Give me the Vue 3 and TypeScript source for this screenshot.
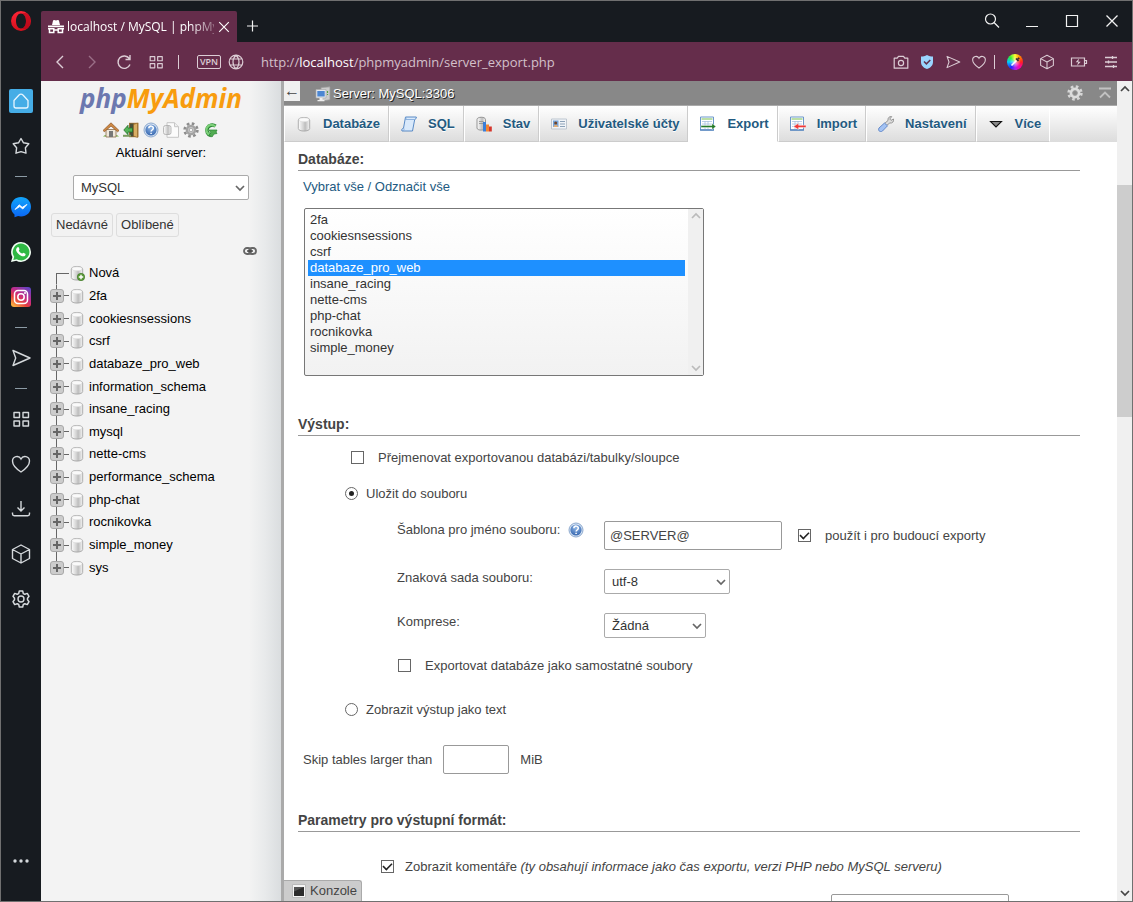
<script setup lang="ts">
import { ref } from 'vue'

interface RailItem {
  icon?: string
  label?: string
  active?: boolean
}
interface Tab {
  label: string
  icon: string
  active?: boolean
}

const rail: RailItem[] = [
  { icon: 'home', label: 'Domů', active: true },
  { icon: 'star', label: 'Oblíbené' },
  {},
  { icon: 'messenger', label: 'Messenger' },
  { icon: 'whatsapp', label: 'WhatsApp' },
  { icon: 'instagram', label: 'Instagram' },
  {},
  { icon: 'send', label: 'Flow' },
  {},
  { icon: 'grid', label: 'Rychlá volba' },
  { icon: 'heart', label: 'Záložky' },
  { icon: 'download', label: 'Stahování' },
  { icon: 'cube', label: 'Rozšíření' },
  { icon: 'gear', label: 'Nastavení' },
]

const navIcons = [
  { icon: 'p-home', label: 'Domů' },
  { icon: 'p-exit', label: 'Odhlásit' },
  { icon: 'p-help', label: 'Dokumentace' },
  { icon: 'p-docs', label: 'Dokumentace MySQL' },
  { icon: 'p-gear', label: 'Nastavení panelu' },
  { icon: 'p-reload', label: 'Obnovit' },
]

const tree = [
  '2fa', 'cookiesnsessions', 'csrf', 'databaze_pro_web', 'information_schema',
  'insane_racing', 'mysql', 'nette-cms', 'performance_schema', 'php-chat',
  'rocnikovka', 'simple_money', 'sys',
]

const tabs: Tab[] = [
  { label: 'Databáze', icon: 'p-db' },
  { label: 'SQL', icon: 'p-sql' },
  { label: 'Stav', icon: 'p-status' },
  { label: 'Uživatelské účty', icon: 'p-users' },
  { label: 'Export', icon: 'p-export', active: true },
  { label: 'Import', icon: 'p-import' },
  { label: 'Nastavení', icon: 'p-wrench' },
  { label: 'Více', icon: 'p-more' },
]

const databases = [
  '2fa', 'cookiesnsessions', 'csrf', 'databaze_pro_web', 'insane_racing',
  'nette-cms', 'php-chat', 'rocnikovka', 'simple_money',
]

const selected = ref<string[]>(['databaze_pro_web'])
const rename = ref(false)
const output = ref('file')
const template = ref('@SERVER@')
const remember = ref(true)
const separate = ref(false)
const comments = ref(true)
const skip = ref('')
</script>

<template>
  <svg class="sprite" aria-hidden="true">
    <defs>
      <linearGradient id="gCyl" x1="0" x2="1"><stop offset="0" stop-color="#fff" /><stop offset=".45" stop-color="#d2d2d2" /><stop offset=".6" stop-color="#bdbdbd" /><stop offset="1" stop-color="#f6f6f6" /></linearGradient>
      <linearGradient id="gMsg" x2="0" y2="1"><stop offset="0" stop-color="#12a5fb" /><stop offset="1" stop-color="#0a66f5" /></linearGradient>
      <linearGradient id="gInsta" x1=".9" y1="0" x2=".2" y2="1"><stop offset="0" stop-color="#5b45c9" /><stop offset=".45" stop-color="#c62b86" /><stop offset=".7" stop-color="#e6413c" /><stop offset="1" stop-color="#fbb040" /></linearGradient>
      <linearGradient id="gOpera" x2="0" y2="1"><stop offset="0" stop-color="#ff2436" /><stop offset="1" stop-color="#d4101c" /></linearGradient>
      <radialGradient id="gHelp" cx=".5" cy=".3" r=".7"><stop offset="0" stop-color="#8fb6e6" /><stop offset="1" stop-color="#3868b0" /></radialGradient>
    </defs>
    <symbol id="opera" viewBox="0 0 20 20"><path fill="url(#gOpera)" fill-rule="evenodd" d="M10 0a10 10 0 1 0 0 20 10 10 0 0 0 0-20zM10 2.500c3 0 5 3.400 5 7.500s-2 7.500-5 7.500S5 14 5 10s2-7.500 5-7.500z" /><path fill="#a70014" d="M11 2.500C13.500 1.500 16 2 17 3.200c4 4 3.500 10.500-.5 14-1.600 1.200-3.800 1.200-5.500.3 2.500-.9 4-4 4-7.500s-1.500-6.700-4-7.500z" opacity=".55" /></symbol>
    <symbol id="home" viewBox="0 0 24 24"><path d="M5 11.500 9.800 6.200a3.200 3.200 0 0 1 4.400 0L19 11.500V17a2 2 0 0 1-2 2H7a2 2 0 0 1-2-2z" fill="none" stroke="#e8f6ff" stroke-width="1.300" /></symbol>
    <symbol id="star" viewBox="0 0 24 24"><path d="m12 4.500 2.500 4.300 5.300 1-3.400 4 .6 5.400-5-1.500-5 1.500.6-5.400-3.400-4 5.300-1z" fill="none" stroke="currentColor" stroke-width="1.400" stroke-linejoin="round" /></symbol>
    <symbol id="messenger" viewBox="0 0 24 24"><path d="M12 2c5.700 0 10 4.200 10 9.700s-4.300 9.700-10 9.700c-1 0-2-.1-2.900-.4L5.500 22.300v-2.800C3.300 17.700 2 15 2 11.700 2 6.200 6.300 2 12 2z" fill="url(#gMsg)" /><path d="m6 14.500 4.200-4.700 3 2.500L18 9.400 13.800 14l-3-2.400z" fill="#fff" stroke="#fff" stroke-width=".8" /></symbol>
    <symbol id="whatsapp" viewBox="0 0 24 24"><path d="M12 2a10 10 0 0 1 0 20c-1.700 0-3.300-.4-4.700-1.200L2 22l1.400-5A10 10 0 0 1 12 2z" fill="#f2fff5" /><path d="M12 3.600a8.400 8.400 0 1 1-4.300 15.600L4.300 20l.9-3.300A8.400 8.400 0 0 1 12 3.600z" fill="#2fb944" /><path d="M8.600 7.200c.7-.4 1.100 0 1.300.6l.6 1.400c.2.600-.8 1.200-.6 1.500.7 1.300 1.700 2.200 3.100 2.900.4.200 1-.9 1.400-.8l1.900.9c.6.300.3 1.300-.1 1.800-.9 1-2.400 1-3.700.5-2.600-1-4.200-2.800-5.200-4.900-.5-1.500-.1-3 1.300-3.900z" fill="#fff" /></symbol>
    <symbol id="instagram" viewBox="0 0 24 24"><rect x="2" y="2" width="20" height="20" rx="3" fill="url(#gInsta)" /><rect x="5.500" y="5.500" width="13" height="13" rx="3.500" fill="none" stroke="#fff" stroke-width="1.500" /><circle cx="12" cy="12" r="3.200" fill="none" stroke="#fff" stroke-width="1.500" /><circle cx="16" cy="8" r="1" fill="#fff" /></symbol>
    <symbol id="send" viewBox="0 0 24 24"><path d="m4 4.500 17 7.500-17 7.500L6.700 12z" fill="none" stroke="currentColor" stroke-width="1.400" stroke-linejoin="round" /></symbol>
    <symbol id="grid" viewBox="0 0 24 24"><path d="M5 5.500h5.500v5H5zM14 5.500h5.500v5H14zM5 14h5.500v5H5zM14 14h5.500v5H14z" fill="none" stroke="currentColor" stroke-width="1.400" stroke-linejoin="round" /></symbol>
    <symbol id="heart" viewBox="0 0 24 24"><path d="M12 20C7.500 17 3.500 13 3.500 9a4.500 4.500 0 0 1 8.500-2 4.500 4.500 0 0 1 8.500 2c0 4-4 8-8.500 11z" fill="none" stroke="currentColor" stroke-width="1.400" /></symbol>
    <symbol id="download" viewBox="0 0 24 24"><path d="M12 4v9.500M8.500 10.500 12 14l3.500-3.500M3.500 15.500V17c0 1 .7 1.700 1.700 1.700h13.600c1 0 1.700-.7 1.700-1.700v-1.500" fill="none" stroke="currentColor" stroke-width="1.400" /></symbol>
    <symbol id="cube" viewBox="0 0 24 24"><path d="m12 3 8.500 4.500v9L12 21l-8.500-4.500v-9zM3.500 7.500 12 12l8.500-4.500M12 12v9" fill="none" stroke="currentColor" stroke-width="1.400" stroke-linejoin="round" /></symbol>
    <symbol id="gear" viewBox="0 0 24 24"><path d="M10.300 4h3.400l.6 2.500 1.500.8 2.500-.9L20 9.300l-1.500 1.900v1.600l1.500 1.900-1.700 2.900-2.500-.9-1.500.8-.6 2.500h-3.400l-.6-2.500-1.500-.8-2.500.9L4 14.700l1.500-1.900v-1.600L4 9.300l1.700-2.900 2.500.9 1.500-.8z" fill="none" stroke="currentColor" stroke-width="1.500" stroke-linejoin="round" /><circle cx="12" cy="12" r="3" fill="none" stroke="currentColor" stroke-width="1.400" /></symbol>
    <symbol id="dots" viewBox="0 0 24 24"><circle cx="6" cy="12" r="1.700" fill="currentColor" /><circle cx="12" cy="12" r="1.700" fill="currentColor" /><circle cx="18" cy="12" r="1.700" fill="currentColor" /></symbol>
    <symbol id="spy" viewBox="0 0 16 16"><path d="M4 6 5 1.800c.2-.7.600-1 1.300-.8L8 1.500 9.700 1c.7-.2 1.100.1 1.300.8L12 6zM0 6.600h16v1.600H0z" fill="#fff" /><path d="M1.500 9.800h4.300v3.800H1.500zM10.200 9.800h4.300v3.800h-4.300zM5.800 11h4.400M0 9.800h2M14 9.800h2" fill="none" stroke="#fff" stroke-width="1.500" /></symbol>
    <symbol id="x" viewBox="0 0 16 16"><path d="m2.500 2.500 11 11m0-11-11 11" stroke="currentColor" stroke-width="1.300" /></symbol>
    <symbol id="plus" viewBox="0 0 16 16"><path d="M7.500 2.500v11M2 8h11" stroke="currentColor" stroke-width="1.200" /></symbol>
    <symbol id="search" viewBox="0 0 16 16"><circle cx="6.500" cy="6" r="5" fill="none" stroke="currentColor" stroke-width="1.200" /><path d="m10 9.500 5 5" stroke="currentColor" stroke-width="1.300" /></symbol>
    <symbol id="min" viewBox="0 0 16 16"><path d="M2 13.500h12" stroke="currentColor" /></symbol>
    <symbol id="max" viewBox="0 0 16 16"><path d="M2.500 2.500h11v11h-11z" fill="none" stroke="currentColor" stroke-width="1.200" /></symbol>
    <symbol id="back" viewBox="0 0 16 16"><path d="M11 2 5 8l6 6" fill="none" stroke="currentColor" stroke-width="1.400" /></symbol>
    <symbol id="reload" viewBox="0 0 16 16"><path d="M14 10.500A6.200 6.200 0 1 1 13.300 4.500M14 1v4.500H9.500" fill="none" stroke="currentColor" stroke-width="1.400" /></symbol>
    <symbol id="globe" viewBox="0 0 16 16"><path d="M8 1.200a6.800 6.800 0 1 0 0 13.600A6.800 6.800 0 0 0 8 1.200zM8 1.200c-4 3.500-4 10 0 13.600 4-3.600 4-10 0-13.600zM2 5h12M2 11h12" fill="none" stroke="currentColor" stroke-width="1.200" /></symbol>
    <symbol id="camera" viewBox="0 0 16 16"><path d="M1.200 4.200h3L5.500 2.300h5l1.300 1.900h3v10H1.200z" fill="none" stroke="currentColor" stroke-width="1.200" stroke-linejoin="round" /><circle cx="8" cy="9" r="2.600" fill="none" stroke="currentColor" stroke-width="1.200" /></symbol>
    <symbol id="shield" viewBox="0 0 16 16"><path d="M8 1c2 1.200 4 1.600 6 1.600V8c0 3.500-2.500 5.800-6 7-3.500-1.200-6-3.500-6-7V2.600C4 2.600 6 2.200 8 1z" fill="#9ad5ff" /><path d="m5 7.500 2.400 2.400L11.300 6" fill="none" stroke="#5f3150" stroke-width="1.500" /></symbol>
    <symbol id="dropper" viewBox="0 0 16 16"><path d="m4.500 11.500 5-5" stroke="#fff" stroke-width="1.600" /><path d="m9 4.500 2.500 2.500M10.500 5.500l1.700-1.700" stroke="#3b2a33" stroke-width="1.700" /></symbol>
    <symbol id="battery" viewBox="0 0 18 16"><path d="M1.500 4h13v8h-13zM14.500 6.500h2v3h-2" fill="none" stroke="currentColor" stroke-width="1.200" /><path d="M9 4.500 5.700 8.200h2.500L7 11.700l3.700-4H8.300z" fill="currentColor" /></symbol>
    <symbol id="sliders" viewBox="0 0 16 16"><path d="M2 3.500h12M2 8h12M2 12.500h12M9.500 2v3M5.500 6.500v3M10.500 11v3" stroke="currentColor" stroke-width="1.300" /></symbol>
    <symbol id="chev" viewBox="0 0 10 10"><path d="m1 3 4 4 4-4" fill="none" stroke="currentColor" stroke-width="1.700" /></symbol>

    <symbol id="p-home" viewBox="0 0 16 16"><path d="M0 14.500c2-2 4-1 5-.5h6c1-.5 3-1.500 5 .5z" fill="#6cab3d" /><path d="M3 7.500h10V15H3z" fill="#eee7da" stroke="#8c6c4a" stroke-width=".8" /><path d="M6 9h4v6H6z" fill="#777" /><path d="M8 .8 0 8.500l1.300 1.300L8 4l6.700 5.800L16 8.500z" fill="#cf8a45" stroke="#8a5222" stroke-width=".7" /></symbol>
    <symbol id="p-exit" viewBox="0 0 16 16"><path d="M6 .8h9.500v14.400H6z" fill="#a87838" /><path d="M6.800 1.500h4v13h-4z" fill="#4a4f39" /><path d="m10.500 2.500 4-1.500v14.500l-4-1.500z" fill="#d9ae65" stroke="#80591f" stroke-width=".5" /><path d="M0 12.800h8v2H0z" fill="#7b9b60" /><path d="M9.500 6v4H5v2.700L.8 8 5 3.300V6z" fill="#54b456" stroke="#246f2b" stroke-width=".8" /></symbol>
    <symbol id="p-help" viewBox="0 0 16 16"><circle cx="8" cy="8" r="7" fill="#d9e5f4" stroke="#8da9ce" /><circle cx="8" cy="8" r="5.600" fill="url(#gHelp)" /><path d="M5.800 6.300c.3-3 4.700-2.800 4.500 0C10.200 8 8.100 8 8.100 9.500M8.100 10.700v1.400" fill="none" stroke="#fff" stroke-width="1.500" /></symbol>
    <symbol id="p-docs" viewBox="0 0 16 16"><path d="M4 .7h7.500l4 4v10.600H4z" fill="#fbfbfb" stroke="#c6c6c6" /><path d="M11.500.7v4h4" fill="#eee" stroke="#c6c6c6" /><rect x=".5" y="3.500" width="7.500" height="9" rx="2" fill="url(#gCyl)" stroke="#a9a9a9" stroke-width=".8" /></symbol>
    <symbol id="p-gear" viewBox="0 0 16 16"><circle cx="8" cy="8" r="6.400" fill="none" stroke="#8c8c8c" stroke-width="2.600" stroke-dasharray="2.600 2.430" /><circle cx="8" cy="8" r="4" fill="#eee" stroke="#a3a3a3" stroke-width="2.700" /><circle cx="8" cy="8" r="1.900" fill="#f4f4f4" stroke="#888" stroke-width=".8" /></symbol>
    <symbol id="p-gear-light" viewBox="0 0 16 16"><circle cx="8" cy="8" r="6.400" fill="none" stroke="#d6d6d6" stroke-width="2.600" stroke-dasharray="2.600 2.430" /><circle cx="8" cy="8" r="4" fill="none" stroke="#dcdcdc" stroke-width="2.900" /><circle cx="8" cy="8" r="2.400" fill="#888" stroke="#aaa" stroke-width=".6" /></symbol>
    <symbol id="p-reload" viewBox="0 0 16 16"><path d="M12.500 4.200A5.300 5.300 0 1 0 8 13.500" fill="none" stroke="#278431" stroke-width="3.600" /><path d="M12.200 4.400A5.100 5.100 0 1 0 8 13" fill="none" stroke="#7bcf78" stroke-width="2.200" /><path d="M6 8h8l-1 2 1 1.500-3 .5-2 3-3-2 2-2z" fill="#52ad52" stroke="#278431" stroke-width=".7" /></symbol>
    <symbol id="p-db" viewBox="0 0 16 16"><path d="M2.300 4c0-3.400 11.400-3.400 11.400 0v8.500c0 3.400-11.400 3.400-11.400 0z" fill="url(#gCyl)" stroke="#a5a5a5" stroke-width=".9" /><ellipse cx="8" cy="3.800" rx="5.200" ry="2" fill="#fafafa" stroke="#d5d5d5" stroke-width=".5" /></symbol>
    <symbol id="p-dbnew" viewBox="0 0 16 16"><use href="#p-db" width="16" height="16" /><circle cx="12" cy="12" r="3.700" fill="#5c9b3b" stroke="#37711f" stroke-width=".6" /><path d="M12 9.800v4.400M9.800 12h4.400" stroke="#fff" stroke-width="1.400" /></symbol>
    <symbol id="p-sql" viewBox="0 0 16 16"><path d="M4.500 1h10.800c.5 1.500-1 2.200-1.600 2.500L11.500 15H1c-.8-1.500.2-2.500 1.500-2.800z" fill="#d9e9fb" stroke="#4a7fc0" stroke-width=".9" /><path d="M4.500 1c1 1 .5 2 0 2.500h9M2.500 12.200c1 .7.500 2-.3 2.800" fill="none" stroke="#7ba5d8" stroke-width=".8" /></symbol>
    <symbol id="p-status" viewBox="0 0 16 16"><path d="M1 3.500c0-3 8.500-3 8.500 0V12c0 2.800-8.500 2.800-8.500 0z" fill="url(#gCyl)" stroke="#888" stroke-width=".9" /><path d="M3 5.500h4.500M3 7.500h4.500" stroke="#999" /><path d="M7 6h3v9.500H7z" fill="#3b7fd8" /><path d="M10 8.500h3v7h-3z" fill="#f48432" /><path d="M13 10.500h2.800v5H13z" fill="#d5352c" /></symbol>
    <symbol id="p-users" viewBox="0 0 16 16"><path d="M.5 3h15v10H.5z" fill="#f1f4f8" stroke="#bdc6d0" /><path d="M2 4.500h5.500V11H2z" fill="#75a5da" /><circle cx="4.700" cy="7" r="1.500" fill="#70442a" /><path d="M2.500 11c.4-3 4-3 4.500 0z" fill="#e4ae77" /><path d="M9 5.500h5M9 8h5M9 10.500h5" stroke="#8ba1b8" /></symbol>
    <symbol id="p-table" viewBox="0 0 16 16"><path d="M.5 1h13v13H.5z" fill="#fff" stroke="#6b97ca" /><path d="M1.500 3h11" stroke="#8ec96b" stroke-width="1.200" /><path d="M2 5.500h10M2 8h10M2 10.500h10M5 5v8M8 5v8" stroke="#a9c2df" stroke-width=".8" /><path d="M0 14h14" stroke="#5686bf" stroke-width="1.400" /></symbol>
    <symbol id="p-export" viewBox="0 0 16 16"><use href="#p-table" width="16" height="16" /><path d="M1 9.500h11V7.500l4 3-4 3v-2H1z" fill="#267b28" stroke="#fff" stroke-width=".4" /></symbol>
    <symbol id="p-import" viewBox="0 0 16 16"><use href="#p-table" width="16" height="16" /><path d="M16 9.300H8.500v-2L3.500 10.500l5 3v-2H16z" fill="#f03a38" stroke="#fff" stroke-width=".4" /></symbol>
    <symbol id="p-wrench" viewBox="0 0 16 16"><path d="m6.500 7.500 3.500-3c-.5-2.500 1.500-4.500 3.700-3.900L11.800 3l1.200 1.400L15.500 3c.7 2.500-1.200 4.500-3.700 4L8.500 9.500z" fill="#ddd" stroke="#828282" stroke-width=".8" /><path d="m6.500 7 3 2.800-5 5.200c-2 2-5-.5-3.500-3z" fill="#a3c2f3" stroke="#5b82c4" stroke-width=".9" /></symbol>
    <symbol id="p-more" viewBox="0 0 16 16"><path d="M2.500 5.500h11L8 11z" fill="#888" stroke="#111" stroke-width="1.100" /></symbol>
    <symbol id="p-server" viewBox="0 0 16 16"><path d="M6 1.500 15 .8v13l-5 .7H6z" fill="#ccc" stroke="#999" stroke-width=".8" /><path d="M12.500 5v2M12.500 8v1" stroke="#57a344" stroke-width="1.200" /><path d="M1 3.500h10v8.500H1z" fill="#e4e9ee" stroke="#aaa" stroke-width=".7" /><path d="M2.300 5h7.400v5.500H2.300z" fill="#4b86d2" /><path d="M4.500 12h3v2h2v1.300h-7V14h2z" fill="#eee" /></symbol>
    <symbol id="p-link" viewBox="0 0 14 10"><rect x="1" y="2" width="7" height="6" rx="3" fill="none" stroke="#666" stroke-width="1.800" /><rect x="6" y="2" width="7" height="6" rx="3" fill="none" stroke="#666" stroke-width="1.800" /><path d="M4 5h6" stroke="#444" stroke-width="1.400" /></symbol>
    <symbol id="p-expand" viewBox="0 0 14 14"><rect x=".5" y=".5" width="13" height="13" rx="2.500" fill="#ccc" stroke="#a8a8a8" /><path d="M7 3v8M3 7h8" stroke="#666" stroke-width="2" /></symbol>
    <symbol id="p-top" viewBox="0 0 12 12"><path d="M0 1.500h12M1 10.500l5-5 5 5" fill="none" stroke="#c2c2c2" stroke-width="1.800" /></symbol>
    <symbol id="p-console" viewBox="0 0 14 14"><path d="M.5.500h13v13H.5z" fill="#f4f4f4" stroke="#bbb" /><path d="M2 3h10v9H2z" fill="#2c2c2c" /><path d="M2 3h10L2 7.500z" fill="#555" /></symbol>
  </svg>

  <div class="window">
    <aside class="rail">
      <button class="opera" aria-label="Opera"><svg><use href="#opera" /></svg></button>
      <template v-for="(item, i) in rail" :key="i">
        <button v-if="item.icon" class="rail-item" :class="{ active: item.active }" :aria-label="item.label">
          <svg><use :href="'#' + item.icon" /></svg>
        </button>
        <div v-else class="dash"></div>
      </template>
      <button class="rail-item last" aria-label="Další"><svg><use href="#dots" /></svg></button>
    </aside>

    <div class="body">
      <header class="titlebar">
        <div class="page-tab">
          <svg class="i16"><use href="#spy" /></svg>
          <span class="tab-title">localhost / MySQL | phpMy</span>
          <button aria-label="Zavřít kartu"><svg class="i14"><use href="#x" /></svg></button>
        </div>
        <button class="slot32" aria-label="Nová karta"><svg class="i16"><use href="#plus" /></svg></button>
        <div class="window-buttons">
          <button aria-label="Hledat"><svg class="i16"><use href="#search" /></svg></button>
          <button aria-label="Minimalizovat"><svg class="i16"><use href="#min" /></svg></button>
          <button aria-label="Maximalizovat"><svg class="i16"><use href="#max" /></svg></button>
          <button aria-label="Zavřít"><svg class="i16"><use href="#x" /></svg></button>
        </div>
      </header>

      <div class="toolbar">
        <button class="slot32" aria-label="Zpět"><svg class="i16"><use href="#back" /></svg></button>
        <button class="slot32 forward" aria-label="Vpřed"><svg class="i16"><use href="#back" /></svg></button>
        <button class="slot32" aria-label="Obnovit"><svg class="i16"><use href="#reload" /></svg></button>
        <button class="slot32" aria-label="Karty"><svg class="i20"><use href="#grid" /></svg></button>
        <i class="bar"></i>
        <button class="vpn">VPN</button>
        <svg class="i16"><use href="#globe" /></svg>
        <div class="url">http://<b>localhost</b>/phpmyadmin/server_export.php</div>
        <button class="slot26" aria-label="Snímek"><svg class="i16"><use href="#camera" /></svg></button>
        <button class="slot26" aria-label="Ochrana"><svg class="i16"><use href="#shield" /></svg></button>
        <button class="slot26" aria-label="Odeslat"><svg class="i18"><use href="#send" /></svg></button>
        <button class="slot26" aria-label="Záložka"><svg class="i18"><use href="#heart" /></svg></button>
        <i class="bar short"></i>
        <button class="slot32" aria-label="Kapátko"><span class="wheel"><svg class="i16"><use href="#dropper" /></svg></span></button>
        <button class="slot32" aria-label="Rozšíření"><svg class="i18"><use href="#cube" /></svg></button>
        <button class="slot32" aria-label="Baterie"><svg class="i18"><use href="#battery" /></svg></button>
        <button class="slot32" aria-label="Snadné nastavení"><svg class="i16"><use href="#sliders" /></svg></button>
      </div>

      <div class="page">
        <nav class="nav">
          <a class="logo" href="#"><span>php</span>MyAdmin</a>
          <div class="nav-icons">
            <a v-for="n in navIcons" :key="n.icon" href="#" :aria-label="n.label"><svg class="i16"><use :href="'#' + n.icon" /></svg></a>
          </div>
          <label class="server-label" for="server">Aktuální server:</label>
          <div class="pick server">
            <select id="server"><option>MySQL</option></select>
            <svg><use href="#chev" /></svg>
          </div>
          <div class="recent">
            <button>Nedávné</button>
            <button>Oblíbené</button>
          </div>
          <a class="link" href="#" aria-label="Propojit s hlavním panelem"><svg><use href="#p-link" /></svg></a>
          <ul class="tree">
            <li class="new">
              <span class="joint"></span>
              <svg class="i16"><use href="#p-dbnew" /></svg>
              <a href="#">Nová</a>
            </li>
            <li v-for="db in tree" :key="db">
              <span class="joint"><button :aria-label="'Rozbalit ' + db"><svg class="i14"><use href="#p-expand" /></svg></button></span>
              <svg class="i16"><use href="#p-db" /></svg>
              <a href="#">{{ db }}</a>
            </li>
          </ul>
        </nav>

        <main class="main">
          <div class="crumbs">
            <button class="collapse" aria-label="Skrýt panel">←</button>
            <svg class="i16"><use href="#p-server" /></svg>
            <a href="#">Server: MySQL:3306</a>
            <button class="settings" aria-label="Nastavení stránky"><svg class="i16"><use href="#p-gear-light" /></svg></button>
            <button aria-label="Nahoru"><svg class="i12"><use href="#p-top" /></svg></button>
          </div>
          <div class="tabs">
            <a v-for="t in tabs" :key="t.label" href="#" :class="{ active: t.active }">
              <svg class="i16"><use :href="'#' + t.icon" /></svg>{{ t.label }}
            </a>
          </div>

          <form class="form" @submit.prevent>
            <section>
              <h3>Databáze:</h3>
              <p class="all"><a href="#">Vybrat vše</a> / <a href="#">Odznačit vše</a></p>
              <div class="listbox">
                <select v-model="selected" multiple size="10" aria-label="Databáze">
                  <option v-for="d in databases" :key="d" :value="d">{{ d }}</option>
                </select>
                <div class="listbar">
                  <svg class="up"><use href="#chev" /></svg>
                  <svg><use href="#chev" /></svg>
                </div>
              </div>
            </section>

            <section class="output">
              <h3>Výstup:</h3>
              <div class="rows">
                <label class="row rename"><input v-model="rename" type="checkbox" />Přejmenovat exportovanou databázi/tabulky/sloupce</label>
                <label class="row radio"><input v-model="output" type="radio" value="file" />Uložit do souboru</label>
                <div class="fields">
                  <div class="field">
                    <label for="tpl">Šablona pro jméno souboru:<svg class="i16"><use href="#p-help" /></svg></label>
                    <input id="tpl" v-model="template" class="text" type="text" />
                    <label class="remember"><input v-model="remember" type="checkbox" />použít i pro budoucí exporty</label>
                  </div>
                  <div class="field">
                    <label for="charset">Znaková sada souboru:</label>
                    <div class="pick charset"><select id="charset"><option>utf-8</option></select><svg><use href="#chev" /></svg></div>
                  </div>
                  <div class="field">
                    <label for="compression">Komprese:</label>
                    <div class="pick compression"><select id="compression"><option>Žádná</option></select><svg><use href="#chev" /></svg></div>
                  </div>
                  <label class="row"><input v-model="separate" type="checkbox" />Exportovat databáze jako samostatné soubory</label>
                </div>
                <label class="row radio as-text"><input v-model="output" type="radio" value="text" />Zobrazit výstup jako text</label>
                <div class="skip">
                  <label for="skip">Skip tables larger than</label>
                  <input id="skip" v-model="skip" class="text" type="text" />
                  <span>MiB</span>
                </div>
              </div>
            </section>

            <section class="format">
              <h3>Parametry pro výstupní formát:</h3>
              <label class="row comments"><input v-model="comments" type="checkbox" /><span>Zobrazit komentáře <em>(ty obsahují informace jako čas exportu, verzi PHP nebo MySQL serveru)</em></span></label>
              <div class="extra"><input class="text" type="text" aria-label="Vlastní komentář" /></div>
            </section>
          </form>
          <button class="console"><svg class="i14"><use href="#p-console" /></svg>Konzole</button>
        </main>

        <div class="scrollbar">
          <svg class="up"><use href="#chev" /></svg>
          <div class="track"><div class="thumb"></div></div>
          <svg><use href="#chev" /></svg>
        </div>
      </div>
    </div>
  </div>
</template>

<style>
body { margin: 0; }
</style>

<style scoped>
* { box-sizing: border-box; }
.sprite { position: absolute; width: 0; height: 0; }
button { border: 0; padding: 0; margin: 0; background: none; font: inherit; color: inherit; display: flex; align-items: center; justify-content: center; }
svg { display: block; flex: none; }
a { text-decoration: none; color: inherit; }
.i12 { width: 12px; height: 12px; }
.i14 { width: 14px; height: 14px; }
.i16 { width: 16px; height: 16px; }
.i18 { width: 18px; height: 18px; }
.i20 { width: 20px; height: 20px; }

.window { display: flex; height: 100vh; border: 1px solid #707070; overflow: hidden; background: #171b20; color: #444; font: 13px/18px "Liberation Sans", Arial, sans-serif; }
.rail { width: 40px; flex: none; display: flex; flex-direction: column; color: #d5d9dc; }
.opera { height: 40px; margin-bottom: 37px; }
.opera svg { width: 20px; height: 20px; }
.rail-item { height: 45px; flex: none; }
.rail-item svg { width: 24px; height: 24px; }
.rail-item.active svg { background: #45ade6; border-radius: 2px; }
.dash { height: 16px; flex: none; display: flex; align-items: center; justify-content: center; }
.dash::before { content: ""; width: 12px; height: 1px; background: #8c9ba5; }
.last { margin-top: auto; margin-bottom: 18px; }

.body { flex: 1; min-width: 0; display: flex; flex-direction: column; }
.titlebar { height: 41px; flex: none; display: flex; color: #f2f2f2; }
.page-tab { width: 196px; margin-top: 10px; padding: 0 6px 0 7px; display: flex; align-items: center; gap: 3px; background: #652d4b; border-radius: 2px 2px 0 0; font: 12px/20px "Open Sans", sans-serif; color: #fff; }
.tab-title { flex: 1; min-width: 0; white-space: nowrap; mask-image: linear-gradient(90deg, #000 calc(100% - 24px), rgba(0, 0, 0, 0.3)); }
.page-tab button { width: 14px; flex: none; }
.slot32 { width: 32px; height: 100%; flex: none; }
.titlebar .slot32 { height: 50px; }
.window-buttons { margin-left: auto; display: flex; }
.window-buttons button { width: 40px; height: 40px; }

.toolbar { height: 39px; flex: none; display: flex; align-items: center; padding: 0 5px 0 3px; background: #652d4b; color: #dccdd5; }
.forward { color: #9a6f87; }
.forward svg { transform: scaleX(-1); }
.slot26 { width: 26px; height: 100%; flex: none; }
.bar { width: 1px; height: 14px; background: #dccdd5; margin: 0 18px 0 6px; }
.bar.short { margin: 0 4px 0 2px; }
.vpn { width: 24px; height: 14px; border: 1px solid #dccdd5; border-radius: 2px; margin-right: 7px; font: 600 9px/12px "Open Sans", sans-serif; }
.url { flex: 1; min-width: 0; margin-left: 17px; overflow: hidden; white-space: nowrap; font: 13px/20px "Open Sans", sans-serif; color: #d3c0ca; }
.url b { font-weight: 400; color: #fff; }
.wheel { width: 16px; height: 16px; border-radius: 50%; background: radial-gradient(circle, rgba(255, 255, 255, 0.7) 0%, transparent 50%), conic-gradient(#ff3, #f80 12%, #f22 25%, #f0a 38%, #a2e 50%, #22f 60%, #0cf 75%, #3e3 87%, #ff3); }

.page { flex: 1; min-height: 0; display: flex; background: #fff; }
.nav { width: 243px; flex: none; border-right: 3px solid #aaa; background: linear-gradient(90deg, #f3f3f3 calc(100% - 32px), #e8eaeb calc(100% - 16px), #dadddf); color: #000; display: flex; flex-direction: column; }
.logo { align-self: center; height: 36px; font: italic 700 26px/34px "Open Sans", sans-serif; color: #f89c0e; }
.logo span { color: #6c78af; }
.nav-icons { display: flex; justify-content: center; gap: 4px; margin-top: 5px; height: 16px; }
.server-label { text-align: center; margin-top: 6px; }
.pick { position: relative; height: 25px; }
.pick select { appearance: none; width: 100%; height: 100%; padding: 0 7px; border: 1px solid #aaa; border-radius: 2px; background: #fff; color: #333; font: inherit; }
.pick svg { position: absolute; right: 4px; top: 8px; width: 10px; height: 10px; color: #666; pointer-events: none; }
.server { width: 176px; margin: 13px auto 0; }
.recent { display: flex; gap: 3px; margin: 13px 0 0 10px; }
.recent button { height: 24px; padding: 0 4px; border: 1px solid #ddd; border-radius: 3px; background: #f2f2f2; color: #333; }
.link { align-self: flex-end; margin: 9px 24px 0 0; }
.link svg { width: 14px; height: 10px; }
.tree { list-style: none; margin: 6px 0 0 9px; padding: 0; height: 317px; display: grid; grid-auto-rows: 1fr; }
.tree li { display: flex; align-items: center; }
.joint { position: relative; align-self: stretch; width: 19px; display: flex; align-items: center; background: linear-gradient(#666, #666) 6px 0 / 1px 100% no-repeat, linear-gradient(#666, #666) 6px 50% / 13px 1px no-repeat; }
.new .joint { background: linear-gradient(#666, #666) 6px 100% / 1px 50% no-repeat, linear-gradient(#666, #666) 6px 50% / 13px 1px no-repeat; }
.tree li:last-child .joint { background: linear-gradient(#666, #666) 6px 0 / 1px 50% no-repeat, linear-gradient(#666, #666) 6px 50% / 13px 1px no-repeat; }
.tree a { margin-left: 4px; }

.main { position: relative; flex: 1; min-width: 0; display: flex; flex-direction: column; overflow: hidden; }
.crumbs { height: 25px; flex: none; display: flex; align-items: center; background: #888; border-bottom: 1px solid #aaa; color: #fff; text-shadow: 1px 1px 0 #222; }
.crumbs > svg { margin: 2px 2px 0 15px; }
.crumbs > a { margin-top: 2px; }
.collapse { width: 16px; height: 20px; align-self: flex-start; background: #f0f0f0; color: #444; text-shadow: none; font-size: 16px; }
.settings { margin-left: auto; margin-right: 16px; }
.crumbs > button:last-child { margin-right: 6px; }
.tabs { height: 36px; flex: none; display: flex; background: linear-gradient(#fff, #dcdcdc); }
.tabs a { display: flex; align-items: center; padding: 0 8px 0 11px; border-left: 1px solid #fff; border-right: 1px solid #ccc; border-bottom: 1px solid #ccc; color: #235a81; font-weight: 700; white-space: nowrap; text-shadow: 0 1px 0 #fff; }
.tabs svg { margin-right: 11px; }
.tabs a.active { background: #fff; border-bottom-color: #fff; }
.tabs a:last-child { border-right-color: #fff; }

.form { padding: 6px 37px 0 14px; flex: none; }
h3 { margin: 0; font-size: 14px; line-height: 22px; border-bottom: 1px solid #999; color: #444; }
.all { margin: 7px 0 12px 5px; color: #235a81; }
.listbox { display: flex; width: 400px; height: 168px; margin-left: 6px; border: 1px solid #777; border-radius: 2px; background: linear-gradient(#fff, #f2f2f2); }
.listbox select { flex: 1; min-width: 0; height: 100%; padding: 3px; border: 0; outline: 0; background: none; font: inherit; color: #333; overflow: hidden; }
.listbox option { height: 16px; min-height: 16px; padding: 0 2px; font: inherit; line-height: 16px; }
.listbox option:checked { background: linear-gradient(#1e90ff, #1e90ff); color: #fff; -webkit-text-fill-color: #fff; }
.listbar { width: 15px; background: #f0f0f0; color: #bbb; display: flex; flex-direction: column; align-items: center; justify-content: space-between; padding: 2px 0; }
.listbar svg { width: 10px; height: 10px; }
.up { transform: scaleY(-1); }

.output { margin-top: 37px; }
.rows { padding-top: 13px; }
.row { display: flex; align-items: center; width: fit-content; height: 17px; line-height: 17px; }
input[type="checkbox"], input[type="radio"] { appearance: none; flex: none; width: 13px; height: 13px; margin: 0; border: 1px solid #666; background: #fff; display: flex; align-items: center; justify-content: center; }
input[type="radio"] { border-radius: 50%; }
input[type="radio"]:checked::before { content: ""; width: 5px; height: 5px; border-radius: 50%; background: #222; }
input[type="checkbox"]:checked::before { content: ""; width: 9px; height: 5px; margin-bottom: 3px; border: solid #222; border-width: 0 0 2px 2px; transform: rotate(-45deg) scale(0.8); }
.row input, .remember input { margin-right: 14px; }
.rename { margin-left: 53px; }
.radio { margin: 19px 0 0 47px; }
.radio input { margin-right: 8px; }
.fields { margin: 19px 0 0 99px; display: flex; flex-direction: column; gap: 19px; }
.field { display: flex; align-items: flex-start; }
.field > label:first-child { width: 207px; display: flex; align-items: center; }
.field > label svg { margin-left: 8px; }
.text { height: 29px; border: 1px solid #999; border-radius: 2px; padding: 0 5px; background: #fff; color: #444; font: inherit; }
#tpl { width: 178px; }
.remember { display: flex; align-items: center; height: 29px; margin-left: 16px; }
.fields > .row { margin-left: 1px; }
.charset { width: 126px; }
.compression { width: 102px; }
.radio.as-text { margin-top: 27px; }
.skip { display: flex; align-items: center; gap: 11px; margin: 27px 0 0 5px; }
#skip { width: 66px; }
.format { margin-top: 35px; }
.comments { margin: 26px 0 0 83px; }
.comments input { margin-right: 11px; }
.extra { display: flex; justify-content: flex-end; padding-right: 71px; margin-top: 19px; }
.extra input { width: 178px; }
.console { position: absolute; left: 0; bottom: 0; height: 21px; padding: 0 4px 0 8px; gap: 4px; background: #ccc; border: solid #aaa; border-width: 1px 1px 0 0; border-radius: 0 3px 0 0; }

.scrollbar { width: 15px; flex: none; background: #f0f0f0; color: #444; display: flex; flex-direction: column; align-items: center; padding: 3px 0; }
.scrollbar > svg { width: 10px; height: 10px; }
.track { flex: 1; width: 100%; padding-top: 91px; }
.thumb { height: 33%; background: #cdcdcd; }
</style>
